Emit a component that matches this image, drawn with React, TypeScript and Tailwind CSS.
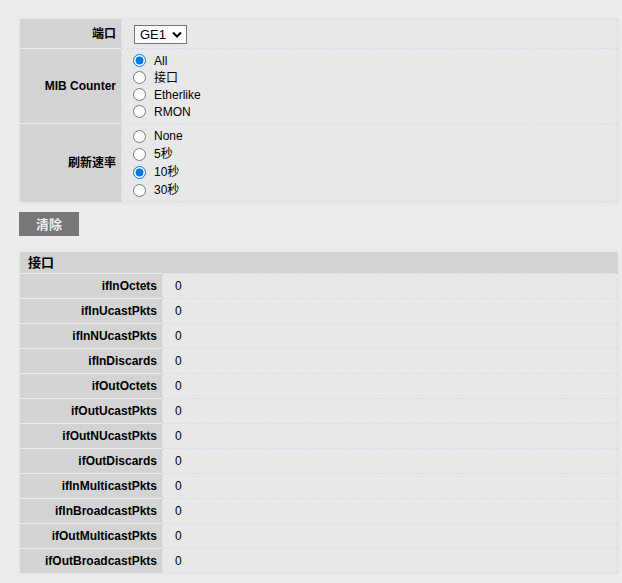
import React from "react";

const counters = [
  "ifInOctets",
  "ifInUcastPkts",
  "ifInNUcastPkts",
  "ifInDiscards",
  "ifOutOctets",
  "ifOutUcastPkts",
  "ifOutNUcastPkts",
  "ifOutDiscards",
  "ifInMulticastPkts",
  "ifInBroadcastPkts",
  "ifOutMulticastPkts",
  "ifOutBroadcastPkts",
];

function Radio({ name, label, checked, h }: { name: string; label: string; checked?: boolean; h: string }) {
  return (
    <label className={`flex items-center ${h}`}>
      <input type="radio" name={name} defaultChecked={checked} className="m-0 h-[13px] w-[13px] shrink-0" />
      <span className="ml-[8px]">{label}</span>
    </label>
  );
}

export default function App() {
  return (
    <div className="min-h-[583px] bg-[#ececec] pt-[19px] text-[12px] leading-none text-black font-[family-name:'Liberation_Sans',Arial,'Noto_Sans_CJK_SC',sans-serif]">
      {/* Settings panel */}
      <div className="ml-[20px] w-[598px] bg-[#e8e8e8] shadow-[0_0_6px_rgba(0,0,0,0.05)]">
        <div className="flex h-[29px]">
          <div className="flex w-[101px] items-center justify-end bg-[#d3d3d3] pr-[5px] font-bold">端口</div>
          <div className="flex flex-1 items-center border-l border-t border-r border-dashed border-[#d9d9f5] pl-[11px]">
            <div className="ml-[1px] flex h-[19px] w-[53px] items-center justify-between border border-[#767676] bg-white pl-[5px] pr-[4px] text-[13px]">
              <span>GE1</span>
              <svg width="10" height="7" viewBox="0 0 10 7">
                <polyline points="1,1.5 5,5.5 9,1.5" fill="none" stroke="#000" strokeWidth="2" />
              </svg>
            </div>
          </div>
        </div>
        <div className="flex h-[75px]">
          <div className="flex w-[101px] items-center justify-end border-t border-[#ececec] bg-[#d3d3d3] pr-[5px] font-bold">MIB Counter</div>
          <div className="flex flex-1 flex-col border-l border-t border-r border-dashed border-[#d9d9f5] pl-[11px] pt-[3px]">
            <Radio name="mib" label="All" checked h="h-[17px]" />
            <Radio name="mib" label="接口" h="h-[17px]" />
            <Radio name="mib" label="Etherlike" h="h-[17px]" />
            <Radio name="mib" label="RMON" h="h-[17px]" />
          </div>
        </div>
        <div className="flex h-[79px]">
          <div className="flex w-[101px] items-center justify-end border-t border-[#ececec] bg-[#d3d3d3] pr-[5px] font-bold">刷新速率</div>
          <div className="flex flex-1 flex-col border border-dashed border-[#d9d9f5] pl-[11px] pt-[3px]">
            <Radio name="rate" label="None" h="h-[18px]" />
            <Radio name="rate" label="5秒" h="h-[18px]" />
            <Radio name="rate" label="10秒" checked h="h-[18px]" />
            <Radio name="rate" label="30秒" h="h-[18px]" />
          </div>
        </div>
      </div>

      {/* Clear button */}
      <button className="ml-[19px] mt-[10px] flex h-[24px] w-[60px] items-center justify-center bg-[#777777] text-[13px] font-bold text-[#ededed]">
        清除
      </button>

      {/* Counters table */}
      <div className="ml-[20px] mt-[16px] w-[598px] bg-[#e8e8e8] shadow-[0_0_6px_rgba(0,0,0,0.05)]">
        <div className="flex h-[21px] items-center bg-[#d3d3d3] pl-[8px] text-[13px] font-bold">接口</div>
        {counters.map((c, i) => (
          <div key={c} className="flex h-[25px]">
            <div className="flex w-[142px] items-center justify-end border-t border-[#ececec] bg-[#d3d3d3] pr-[5px] font-bold">{c}</div>
            <div
              className={`flex flex-1 items-center border-l border-t border-r border-dashed border-[#d9d9f5] pl-[12px] ${
                i === counters.length - 1 ? "border-b" : ""
              }`}
            >
              0
            </div>
          </div>
        ))}
      </div>
    </div>
  );
}
